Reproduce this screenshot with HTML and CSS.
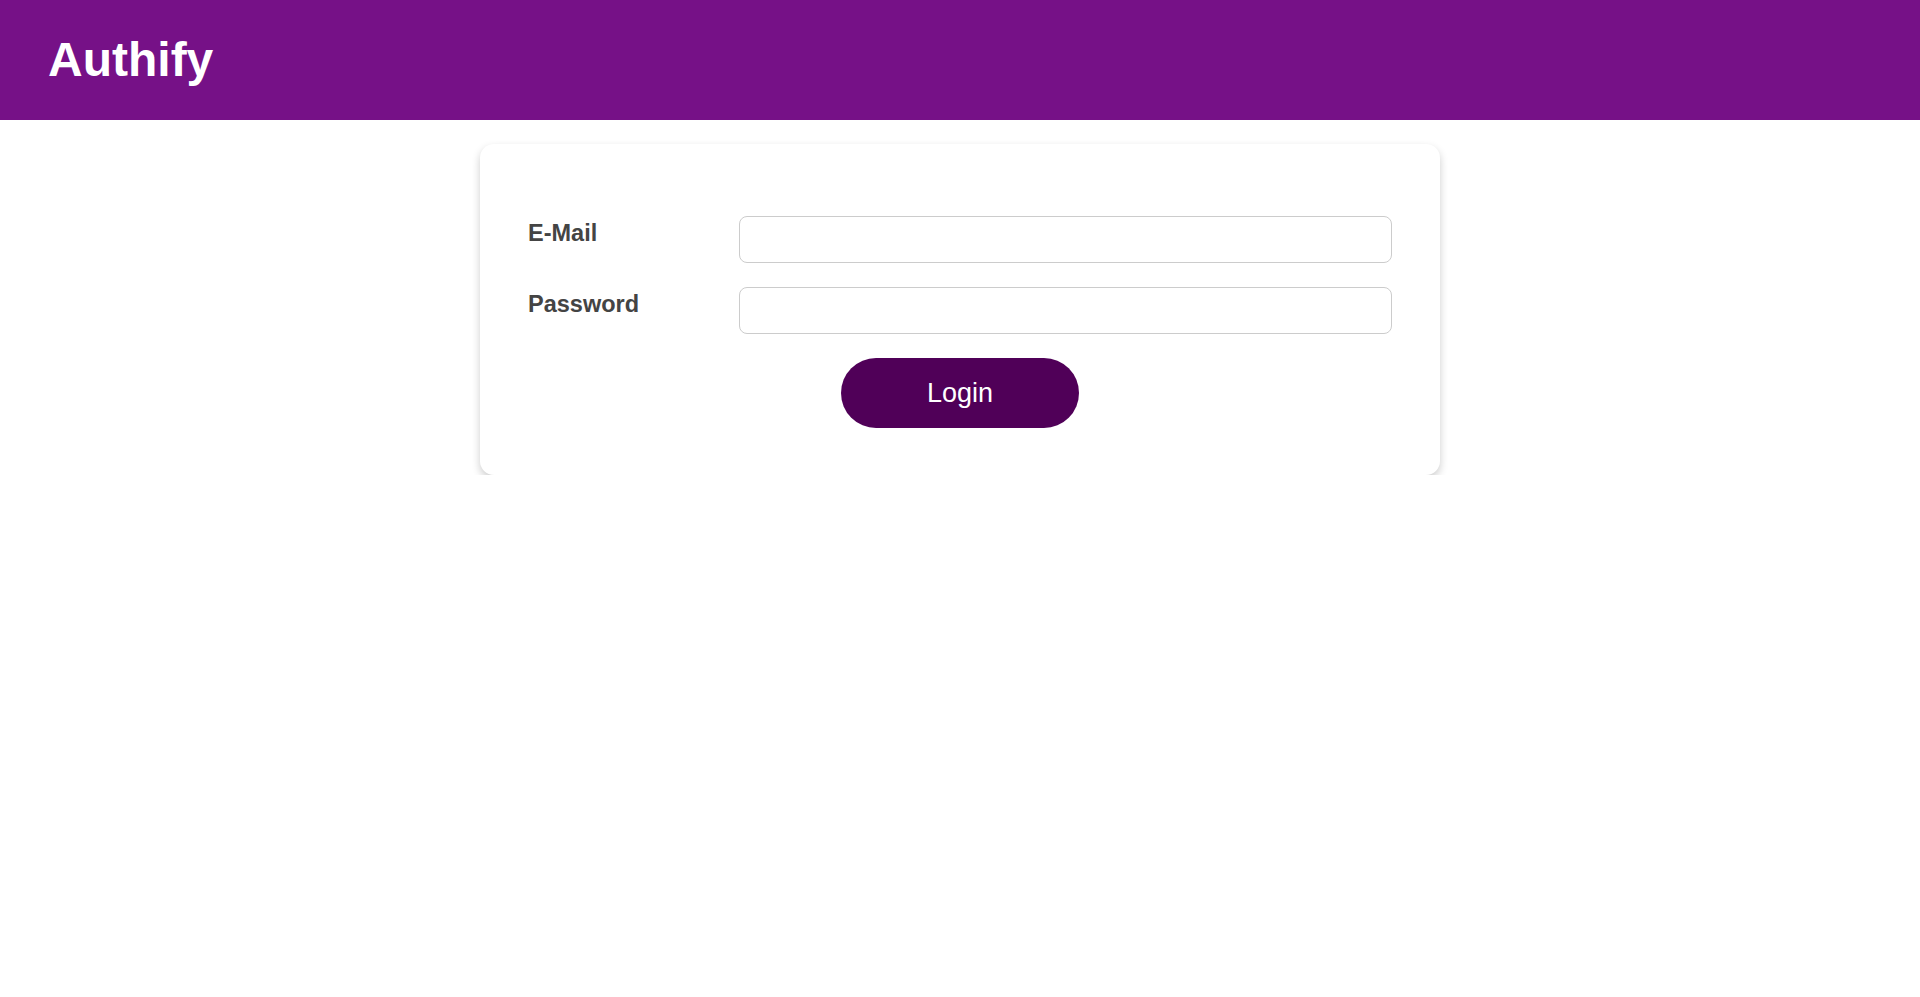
FILE: index.html
```html
<!DOCTYPE html>
<html lang="en">
<head>
<meta charset="utf-8">
<title>Authify</title>
<link rel="stylesheet" href="styles.css">
</head>
<body>
<header class="topbar">
  <h1 class="brand">Authify</h1>
</header>
<main class="page">
  <form class="card" onsubmit="return false;">
    <div class="row">
      <label class="label" for="email">E-Mail</label>
      <input class="field" id="email" type="email">
    </div>
    <div class="row">
      <label class="label" for="password">Password</label>
      <input class="field" id="password" type="password">
    </div>
    <div class="actions">
      <button class="btn" type="submit">Login</button>
    </div>
  </form>
</main>
</body>
</html>
```

FILE: styles.css
```css
* { box-sizing: border-box; }
html, body { margin: 0; padding: 0; background: #fff; }
body { font-family: "Liberation Sans", Arial, sans-serif; }

.topbar {
  height: 120px;
  background: #761187;
  display: flex;
  align-items: center;
  padding-left: 48px;
}
.brand {
  margin: 0;
  color: #fff;
  font-size: 48px;
  font-weight: 700;
  line-height: 1;
}

.page {
  display: flex;
  justify-content: center;
  padding-top: 24px;
}

.card {
  width: 960px;
  background: #fff;
  border-radius: 14px;
  box-shadow: 0 4px 8px 0 rgba(0, 0, 0, 0.2);
  padding: 72px 48px 47px;
  display: flex;
  flex-direction: column;
  gap: 24px;
}

.row {
  display: grid;
  grid-template-columns: 211px 1fr;
  align-items: start;
}

.label {
  color: #444;
  font-size: 23.5px;
  font-weight: 700;
  padding-top: 4px;
}

.field {
  height: 47px;
  width: 100%;
  border: 1px solid #ccc;
  border-radius: 8px;
  background: #fff;
  font-family: inherit;
  font-size: 18px;
  padding: 0 12px;
}

.actions {
  display: flex;
  justify-content: center;
}

.btn {
  width: 238px;
  height: 70px;
  border: none;
  border-radius: 35px;
  background: #500058;
  color: #fff;
  font-family: "Liberation Sans", Arial, sans-serif;
  font-size: 27px;
  cursor: pointer;
}
```
